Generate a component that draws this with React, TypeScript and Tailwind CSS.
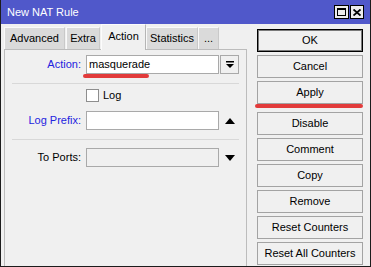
import React from 'react';

const font = { fontFamily: '"Liberation Sans", Arial, sans-serif' };

function DropIcon() {
  return (
    <svg width="8" height="7" viewBox="0 0 8 7">
      <rect x="0" y="0" width="8" height="1.5" fill="#000" />
      <polygon points="0,3 8,3 4,7" fill="#000" />
    </svg>
  );
}

function Tri({ up }: { up?: boolean }) {
  return (
    <svg width="10" height="6" viewBox="0 0 10 6">
      <polygon points={up ? '0,6 10,6 5,0' : '0,0 10,0 5,6'} fill="#000" />
    </svg>
  );
}

const buttons1 = ['Cancel', 'Apply'];
const buttons2 = ['Disable', 'Comment', 'Copy', 'Remove', 'Reset Counters', 'Reset All Counters'];

export default function App() {
  return (
    <div
      style={font}
      className="flex h-[267px] w-[371px] flex-col overflow-hidden border-x border-b border-[#1c1c1c] bg-[#f0f0f0] text-[11px] text-black"
    >
      {/* title bar */}
      <div className="flex h-[24px] shrink-0 items-center bg-[#5058ca] pl-[6px] pr-[6px]">
        <span className="flex-1 text-[11px] text-white">New NAT Rule</span>
        <div className="flex gap-px">
          <div className="flex h-[14px] w-[15px] items-center justify-center border border-black bg-[#ececec]">
            <svg width="9" height="8" viewBox="0 0 9 8">
              <rect x="0.5" y="0.5" width="8" height="7" fill="none" stroke="#000" />
              <rect x="0" y="0" width="9" height="2" fill="#000" />
            </svg>
          </div>
          <div className="flex h-[14px] w-[14px] items-center justify-center border border-black bg-[#ececec]">
            <svg width="8" height="7" viewBox="0 0 8 7">
              <path d="M0.5 0.5 L7.5 6.5 M7.5 0.5 L0.5 6.5" stroke="#000" strokeWidth="1.8" />
            </svg>
          </div>
        </div>
      </div>

      <div className="flex flex-1">
        {/* left: tabs + panel */}
        <div className="flex w-[246px] flex-col pl-[3px]">
          <div className="flex h-[25px] items-end">
            <div className="flex h-[22px] w-[61px] items-center justify-center border border-b-0 border-[#f9f9f9] border-r-[#c9c9c9] bg-[#dadada]">
              Advanced
            </div>
            <div className="ml-px flex h-[22px] w-[34px] items-center justify-center border border-b-0 border-[#f9f9f9] border-r-[#c9c9c9] bg-[#dadada]">
              Extra
            </div>
            <div className="relative z-10 -mb-px ml-px flex h-[26px] w-[45px] items-center justify-center border border-b-0 border-[#fcfcfc] border-r-[#b5b5b5] bg-[#f0f0f0] pb-[2px]">
              Action
            </div>
            <div className="flex h-[22px] w-[52px] items-center justify-center border border-b-0 border-[#f9f9f9] border-r-[#c9c9c9] bg-[#dadada]">
              Statistics
            </div>
            <div className="flex h-[22px] w-[21px] items-center justify-center border border-b-0 border-[#f9f9f9] border-r-[#c9c9c9] bg-[#dadada]">
              ...
            </div>
          </div>

          <div className="flex w-[243px] flex-1 flex-col border-x border-t border-[#bcbcbc] pt-[5px]">
            {/* Action */}
            <div className="flex h-[19px] items-center">
              <span className="w-[76px] text-right text-[#2323df]">Action:</span>
              <div className="relative ml-[5px] flex h-[19px] w-[133px] items-center border border-[#a9a9a9] bg-white pl-[2px]">
                masquerade
                <div className="absolute left-[-4px] top-[18px] h-[4px] w-[66px] rounded-full bg-[#e23b3b]" />
              </div>
              <div className="ml-px flex h-[19px] w-[19px] items-center justify-center border border-[#a9a9a9] bg-[#f0f0f0]">
                <DropIcon />
              </div>
            </div>

            <div className="mx-[7px] mt-[9px] h-px bg-[#d8d8d8]" />

            {/* Log */}
            <div className="mt-[5px] flex h-[13px] items-center">
              <div className="ml-[81px] h-[13px] w-[13px] border border-[#8e8e8e] bg-white" />
              <span className="ml-[4px]">Log</span>
            </div>

            {/* Log Prefix */}
            <div className="mt-[9px] flex h-[19px] items-center">
              <span className="w-[76px] text-right text-[#2323df]">Log Prefix:</span>
              <div className="ml-[5px] h-[19px] w-[133px] border border-[#a9a9a9] bg-white" />
              <div className="ml-[6px] flex items-center">
                <Tri up />
              </div>
            </div>

            <div className="mx-[7px] mt-[9px] h-px bg-[#d8d8d8]" />

            {/* To Ports */}
            <div className="mt-[8px] flex h-[19px] items-center">
              <span className="w-[76px] text-right">To Ports:</span>
              <div className="ml-[5px] h-[19px] w-[133px] border border-[#a9a9a9] bg-[#f0f0f0]" />
              <div className="ml-[6px] flex items-center">
                <Tri />
              </div>
            </div>
          </div>
        </div>

        {/* right: buttons */}
        <div className="ml-[10px] flex w-[106px] flex-col pt-[5px]">
          <div className="flex flex-col gap-[3px]">
            <button className="flex h-[23px] items-center justify-center border border-black bg-[#f0f0f0] shadow-[inset_0_0_0_1px_#7a7a7a]">
              OK
            </button>
            {buttons1.map((b) => (
              <button
                key={b}
                className="relative flex h-[23px] items-center justify-center border border-[#a3a3a3] bg-[#f0f0f0]"
              >
                {b}
                {b === 'Apply' && (
                  <div className="absolute left-[-3px] top-[22px] h-[4px] w-[108px] rounded-full bg-[#e23b3b]" />
                )}
              </button>
            ))}
          </div>
          <div className="mt-[8px] flex flex-col gap-[3px]">
            {buttons2.map((b) => (
              <button
                key={b}
                className="flex h-[23px] items-center justify-center border border-[#a3a3a3] bg-[#f0f0f0]"
              >
                {b}
              </button>
            ))}
          </div>
        </div>
      </div>
    </div>
  );
}
